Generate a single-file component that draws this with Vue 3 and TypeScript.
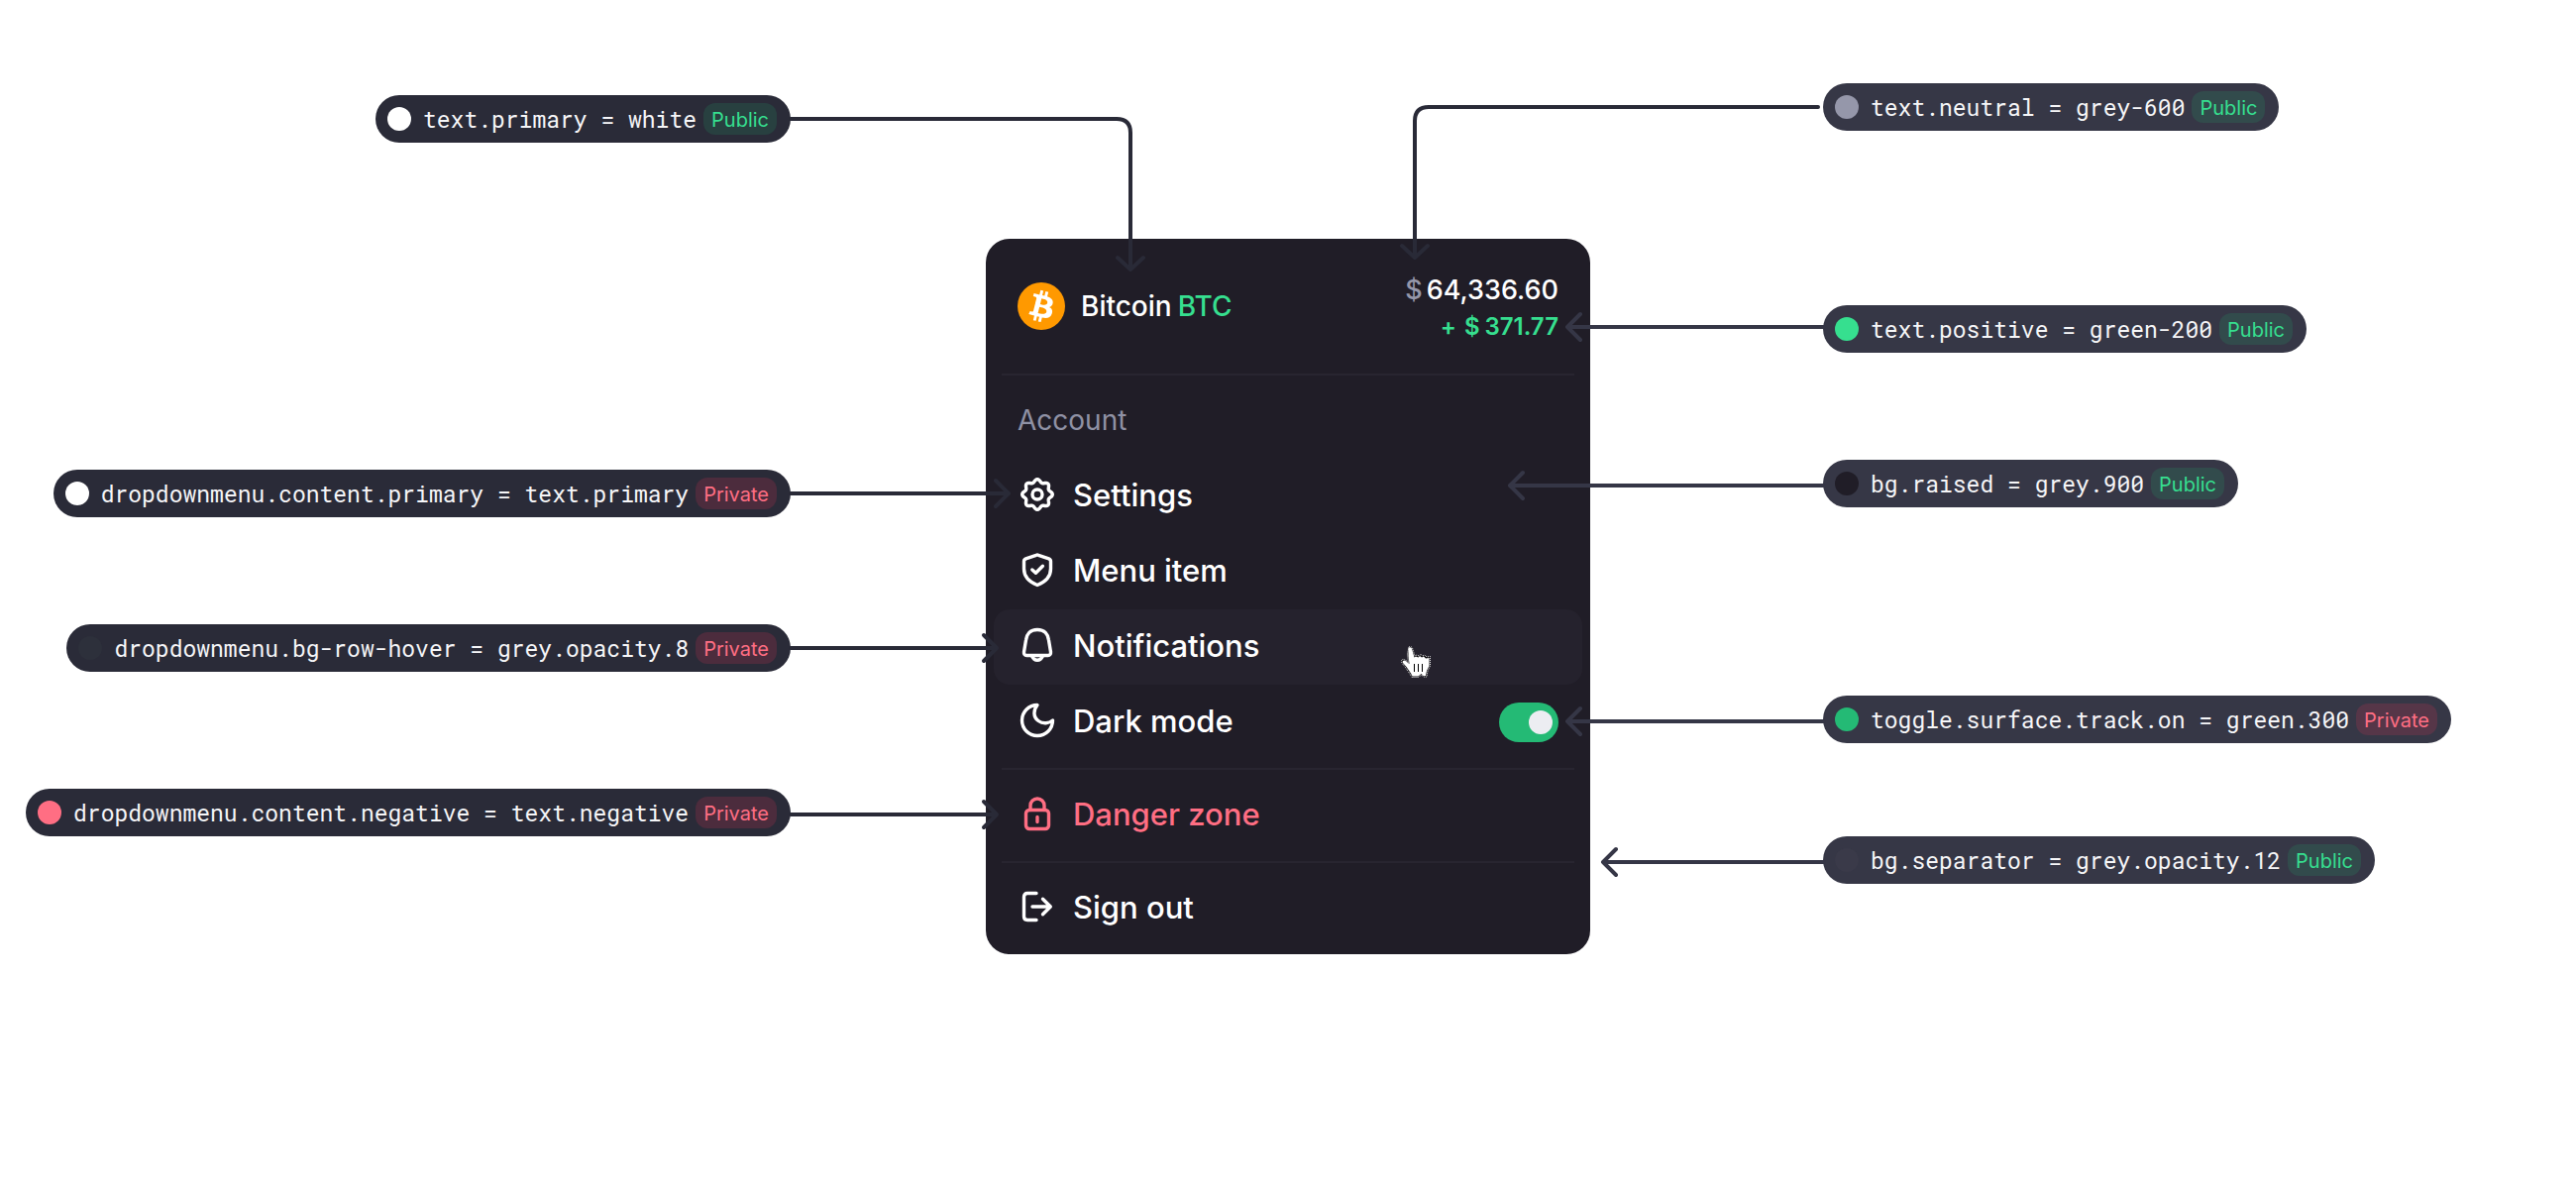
<script setup lang="ts">
import { ref } from 'vue'

type Scope = 'Public' | 'Private'

interface Token {
  text: string
  scope: Scope
  swatch: string
  top: number
}

const contentTokens: Token[] = [
  { text: 'text.primary = white', scope: 'Public', swatch: '#ffffff', top: 96 },
  { text: 'dropdownmenu.content.primary = text.primary', scope: 'Private', swatch: '#ffffff', top: 474 },
  { text: 'dropdownmenu.bg-row-hover = grey.opacity.8', scope: 'Private', swatch: '#2d303b', top: 630 },
  { text: 'dropdownmenu.content.negative = text.negative', scope: 'Private', swatch: '#ff6e83', top: 796 },
]

const surfaceTokens: Token[] = [
  { text: 'text.neutral = grey-600', scope: 'Public', swatch: '#9597aa', top: 84 },
  { text: 'text.positive = green-200', scope: 'Public', swatch: '#36df8f', top: 308 },
  { text: 'bg.raised = grey.900', scope: 'Public', swatch: '#201d27', top: 464 },
  { text: 'toggle.surface.track.on = green.300', scope: 'Private', swatch: '#24ba75', top: 702 },
  { text: 'bg.separator = grey.opacity.12', scope: 'Public', swatch: '#3a3a49', top: 844 },
]

// Connector coordinates: x from the left edge of the card, y from the top of the board.
const contentArrows: string[] = [
  'M-197 120H132Q146 120 146 134V272M133 260L146 272L159 260',
  'M-197 498H23M10 485L23 498L10 511',
  'M-197 654H11M-2 641L11 654L-2 667',
  'M-197 822H11M-2 809L11 822L-2 835',
  'M840 108H447Q433 108 433 122V260M420 248L433 260L446 248',
]
const surfaceArrows: string[] = [
  'M846 330H587M600 317L587 330L600 343',
  'M846 490H529M542 477L529 490L542 503',
  'M846 728H587M600 715L587 728L600 741',
  'M846 870H623M636 857L623 870L636 883',
]

// Eight-lobed gear outline, as a wave around a circle.
const gearPath = Array.from({ length: 96 }, (_, i) => {
  const a = (i / 96) * Math.PI * 2
  const r = 13.8 + 1.5 * Math.cos(8 * a)
  return `${i ? 'L' : 'M'}${(20 + r * Math.sin(a)).toFixed(2)} ${(20 - r * Math.cos(a)).toFixed(2)}`
}).join('') + 'Z'

const darkMode = ref(true)
</script>

<template>
  <main class="board">
    <section class="side side-left" aria-label="Content tokens">
      <div v-for="t in contentTokens" :key="t.text" class="token" :style="{ top: t.top + 'px' }">
        <i class="swatch" :style="{ background: t.swatch }"></i>
        <code class="name">{{ t.text }}</code>
        <span class="badge" :class="t.scope.toLowerCase()">{{ t.scope }}</span>
      </div>
    </section>

    <section class="card" aria-label="Account menu">
      <header class="head">
        <svg class="coin" viewBox="0 0 32 32" aria-hidden="true">
          <circle cx="16" cy="16" r="16" fill="#ff9900" />
          <path transform="translate(16 16) scale(1.08) translate(-16 -16)" fill="#fff" d="M23.189 14.02c.314-2.096-1.283-3.223-3.465-3.975l.708-2.84-1.728-.43-.69 2.765c-.454-.114-.92-.22-1.385-.326l.695-2.783L15.596 6l-.708 2.839c-.376-.086-.746-.17-1.104-.26l.002-.009-2.384-.595-.46 1.846s1.283.294 1.256.312c.7.175.826.638.805 1.006l-.806 3.235c.048.012.11.03.18.057l-.183-.045-1.13 4.532c-.086.212-.303.531-.793.41.018.025-1.256-.313-1.256-.313l-.858 1.978 2.25.561c.418.105.828.215 1.231.318l-.715 2.872 1.727.43.708-2.84c.472.127.93.245 1.378.357l-.706 2.828 1.728.43.715-2.866c2.948.558 5.164.333 6.097-2.333.752-2.146-.037-3.385-1.588-4.192 1.13-.26 1.98-1.003 2.207-2.538zm-3.95 5.538c-.533 2.147-4.148.986-5.32.695l.95-3.805c1.172.293 4.929.872 4.37 3.11zm.535-5.569c-.487 1.953-3.495.96-4.47.717l.86-3.45c.975.243 4.118.696 3.61 2.733z" />
        </svg>
        <p class="asset"><span>Bitcoin</span><span class="positive">BTC</span></p>
        <div class="value">
          <p class="price"><span class="neutral">$</span><span>64,336.60</span></p>
          <p class="change positive"><span>+</span><span class="sum"><span>$</span><span>371.77</span></span></p>
        </div>
      </header>

      <hr class="rule" />
      <h2 class="group">Account</h2>

      <button type="button" class="row">
        <svg class="icon" viewBox="0 0 40 40" aria-hidden="true">
          <path :d="gearPath" />
          <circle cx="20" cy="20" r="5" />
        </svg>
        <span class="label">Settings</span>
      </button>
      <button type="button" class="row">
        <svg class="icon" viewBox="0 0 40 40" aria-hidden="true">
          <path d="M18.8 5.3Q20 4.8 21.2 5.3L31.6 8.8Q33.5 9.5 33.5 11.5V19C33.5 28 27.5 32.5 20 35.5C12.5 32.5 6.5 28 6.5 19V11.5Q6.5 9.5 8.4 8.8Z" />
          <path d="M14.8 20L18.4 23.2L25.4 16.2" />
        </svg>
        <span class="label">Menu item</span>
      </button>
      <button type="button" class="row active">
        <svg class="icon" viewBox="0 0 40 40" aria-hidden="true">
          <path d="M20 4.5C12.5 4.5 9 9.5 8.5 15L6.5 27Q6.2 30.3 9.3 30.5H30.7Q33.8 30.3 33.5 27L31.5 15C31 9.5 27.5 4.5 20 4.5Z" />
          <path d="M14.5 31C15.8 33.8 17.5 35.3 20 35.3S24.2 33.8 25.5 31" />
        </svg>
        <span class="label">Notifications</span>
        <svg class="pointer" viewBox="0 0 32 36" aria-hidden="true">
          <path class="halo" d="M9 3Q11 1.5 12.5 4L15 12L17 11L19 12L21 10.5L23 12L25 11L27 13L30.5 12.5V22L28 27L27 33H24L21.500 31L19 33.500H12L10 30L5.500 23.500L1.500 18.500Q1 15 4.500 15.500L8.500 18.500L7.500 10Z" />
          <path class="skin" d="M8.500 4Q10.500 2.500 12 4.500L14.500 13.500L16 12.500L18.500 13.500L20 12L22 13.500L24 12.500L26 14.500L29.500 14V22L27 27L26 32H23.500L21.500 30L18.500 32.500H12.500L11 29.500L6.500 23L2.500 18.500Q2.500 16 5 16.500L9.500 20L8.500 12Z" />
          <path class="lines" d="M14.500 20V28M18.500 20V28M22.500 20V28" />
        </svg>
      </button>
      <label class="row">
        <svg class="icon" viewBox="0 0 40 40" aria-hidden="true">
          <path d="M20 4.5A15.5 15.5 0 1 0 35.5 20C32 23 26 24.2 21 20.5C15.5 16.5 16 9.5 20 4.5Z" />
        </svg>
        <span class="label">Dark mode</span>
        <input v-model="darkMode" type="checkbox" class="toggle" />
      </label>

      <hr class="rule" />
      <button type="button" class="row danger">
        <svg class="icon" viewBox="0 0 40 40" aria-hidden="true">
          <rect x="8.5" y="16.5" width="23" height="19" rx="3.5" />
          <path d="M13 16.5V12A7 7 0 0 1 27 12V16.5M20 23.5V28.5" />
        </svg>
        <span class="label">Danger zone</span>
      </button>

      <hr class="rule" />
      <button type="button" class="row">
        <svg class="icon" viewBox="0 0 40 40" aria-hidden="true">
          <path d="M19 6.5H10Q6.5 6.5 6.5 10V30Q6.5 33.5 10 33.5H19M15 20H33M25.5 12.2L33.3 20L25.5 27.8" />
        </svg>
        <span class="label">Sign out</span>
      </button>
    </section>

    <section class="side side-right" aria-label="Surface tokens">
      <div v-for="t in surfaceTokens" :key="t.text" class="token" :style="{ top: t.top + 'px' }">
        <i class="swatch" :style="{ background: t.swatch }"></i>
        <code class="name">{{ t.text }}</code>
        <span class="badge" :class="t.scope.toLowerCase()">{{ t.scope }}</span>
      </div>
    </section>

    <svg class="arrows" aria-hidden="true">
      <path v-for="d in contentArrows" :key="d" :d="d" stroke="#292a37" />
      <path v-for="d in surfaceArrows" :key="d" :d="d" stroke="#353646" />
    </svg>
  </main>
</template>

<style>
body {
  margin: 0;
  background: #ffffff;
}
</style>

<style scoped>
.board {
  position: relative;
  display: grid;
  grid-template-columns: 1fr 610px 1fr;
  font-family: Inter, "Liberation Sans", sans-serif;
  color: #ffffff;
}

.side {
  position: relative;
}

.token {
  position: absolute;
  display: flex;
  align-items: center;
  box-sizing: border-box;
  height: 48px;
  padding: 0 14px 0 12px;
  border-radius: 24px;
  white-space: nowrap;
}
.side-left .token {
  right: 197px;
  background: #2a2b38;
}
.side-right .token {
  left: 235px;
  background: #363746;
}
.swatch {
  width: 24px;
  height: 24px;
  margin-right: 12px;
  border-radius: 50%;
}
.name {
  margin-right: 7px;
  font-family: "Roboto Mono", "Liberation Mono", monospace;
  font-size: 23px;
  line-height: 32px;
  color: #f6f6f8;
}
.badge {
  padding: 2px 8px 0;
  border-radius: 12px;
  font-size: 20px;
  line-height: 30px;
}
.public {
  background: rgba(30, 200, 110, 0.14);
  color: #36df8f;
}
.private {
  background: rgba(255, 50, 90, 0.16);
  color: #ff6e83;
}

.card {
  margin: 241px 0;
  padding: 8px;
  border-radius: 24px;
  background: #201d27;
}
.head {
  display: flex;
  align-items: center;
  height: 120px;
  padding: 0 24px;
}
.coin {
  width: 48px;
  height: 48px;
  margin-right: 16px;
}
p {
  margin: 0;
}
.asset {
  display: flex;
  gap: 6px;
  font-size: 28px;
  font-weight: 500;
}
.value {
  margin-left: auto;
  padding-top: 2px;
}
.price,
.change {
  display: flex;
  justify-content: flex-end;
}
.price {
  gap: 4px;
  font-size: 27px;
  font-weight: 550;
  line-height: 40px;
}
.change {
  gap: 8px;
  font-size: 24px;
  font-weight: 600;
  line-height: 34px;
}
.sum {
  display: flex;
  gap: 5px;
}
.positive {
  color: #36df8f;
}
.neutral {
  color: #9597aa;
}

.rule {
  height: 2px;
  margin: 8px;
  border: 0;
  background: #282530;
}
.group {
  box-sizing: border-box;
  height: 76px;
  margin: 0;
  padding: 0 24px;
  font-size: 28px;
  font-weight: 400;
  line-height: 74px;
  color: #8f91a4;
}
.row {
  position: relative;
  display: flex;
  align-items: center;
  box-sizing: border-box;
  width: 100%;
  height: 76px;
  padding: 0 24px;
  border: 0;
  border-radius: 16px;
  background: none;
  font: inherit;
  color: inherit;
  text-align: left;
  cursor: pointer;
}
.active {
  background: #25222d;
}
.danger {
  color: #ff6e83;
}
.icon {
  width: 40px;
  height: 40px;
  margin: 0 16px 4px 0;
  fill: none;
  stroke: currentColor;
  stroke-width: 3.4;
  stroke-linecap: round;
  stroke-linejoin: round;
}
.label {
  padding-bottom: 2px;
  font-size: 31px;
  font-weight: 550;
  line-height: 40px;
}

.toggle {
  appearance: none;
  display: flex;
  align-items: center;
  box-sizing: border-box;
  width: 60px;
  height: 40px;
  margin: 0 0 0 auto;
  padding: 0 6px;
  border-radius: 20px;
  background: #4a4b5c;
  cursor: pointer;
}
.toggle::before {
  content: "";
  width: 24px;
  height: 24px;
  border-radius: 50%;
  background: #ecedf2;
}
.toggle:checked {
  justify-content: flex-end;
  background: #24ba75;
}

.pointer {
  position: absolute;
  top: 35px;
  right: 152px;
  width: 32px;
  height: 36px;
}
.halo {
  fill: #08070a;
  stroke: #ffffff;
  stroke-width: 1;
  stroke-dasharray: 1 1;
}
.skin {
  fill: #ffffff;
}
.lines {
  fill: none;
  stroke: #000000;
  stroke-width: 1;
}

.arrows {
  position: absolute;
  top: 0;
  left: calc(50% - 305px);
  width: 610px;
  height: 100%;
  overflow: visible;
  pointer-events: none;
  fill: none;
  stroke-width: 4;
  stroke-linecap: round;
  stroke-linejoin: round;
}
</style>
